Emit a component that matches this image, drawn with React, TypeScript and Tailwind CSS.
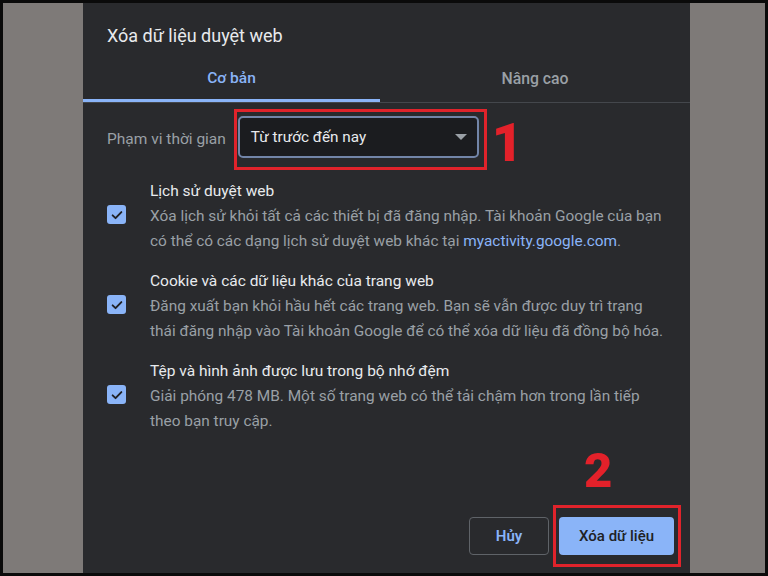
import React from "react";

function Check() {
  return (
    <div className="w-[19px] h-[19px] rounded-[3px] bg-[#8ab4f8] flex items-center justify-center shrink-0">
      <svg width="14" height="14" viewBox="0 0 24 24" fill="none">
        <path d="M4.5 12.5l5 5L19.5 7" stroke="#202124" strokeWidth="3.2" strokeLinecap="round" strokeLinejoin="round" />
      </svg>
    </div>
  );
}

function Item({ title, lines }: { title: string; lines: React.ReactNode[] }) {
  return (
    <div className="flex">
      <div className="mt-[26px] w-[19px] shrink-0">
        <Check />
      </div>
      <div className="ml-[24px]">
        <div className="text-[15.5px] leading-[24px] text-[#e8eaed] whitespace-nowrap">{title}</div>
        <div className="mt-[1px] text-[15.4px] leading-[25px] text-[#9aa0a6]">
          {lines.map((l, i) => (
            <div key={i} className="whitespace-nowrap">{l}</div>
          ))}
        </div>
      </div>
    </div>
  );
}

export default function App() {
  return (
    <div
      className="w-[768px] h-[576px] bg-[#0a0a0a] p-[3px] overflow-hidden"
      style={{ fontFamily: "Roboto, 'Noto Sans', sans-serif" }}
    >
      <div className="flex h-[570px]">
        <div className="w-[80px] bg-[#7e7a78]" />
        <div className="w-[607px] bg-[#292a2d] flex flex-col">
          <div className="pt-[21px] pl-[24px] text-[18px] leading-[24px] text-[#e8eaed]">
            Xóa dữ liệu duyệt web
          </div>
          <div className="flex border-b border-[#44474c]">
            <div className="w-[297px] h-[54px] pt-[10px] flex items-center justify-center border-b-[3px] border-[#8ab4f8] text-[15.5px] font-medium text-[#8ab4f8]">
              Cơ bản
            </div>
            <div className="flex-1 h-[54px] pt-[10px] pb-[3px] flex items-center justify-center text-[15.8px] font-medium text-[#9aa0a6]">
              Nâng cao
            </div>
          </div>
          <div className="flex items-start mt-[6px] pl-[24px]">
            <div className="mt-[20px] text-[15.5px] leading-[20px] text-[#9aa0a6] whitespace-nowrap">
              Phạm vi thời gian
            </div>
            <div className="ml-[8px] border-[3px] border-[#e0232b] pl-[1px] pr-[5px] pt-[4px] pb-[9px]">
              <div className="w-[241px] h-[42px] rounded-[5px] border-2 border-[#7285a8] bg-[#1b1c1f] flex items-center justify-between pl-[11px] pr-[10px]">
                <span className="text-[15.3px] text-[#e8eaed]">Từ trước đến nay</span>
                <svg width="12" height="6" viewBox="0 0 12 6">
                  <path d="M0 0h12L6 6z" fill="#9aa0a6" />
                </svg>
              </div>
            </div>
            <div className="ml-[5px] mt-[7px] text-[54px] leading-none font-black text-[#e3212a]">1</div>
          </div>
          <div className="mt-[9px] pl-[24px] flex flex-col gap-[15px]">
            <Item
              title="Lịch sử duyệt web"
              lines={[
                "Xóa lịch sử khỏi tất cả các thiết bị đã đăng nhập. Tài khoản Google của bạn",
                <>
                  có thể có các dạng lịch sử duyệt web khác tại{" "}
                  <span className="text-[#8ab4f8]">myactivity.google.com</span>.
                </>,
              ]}
            />
            <Item
              title="Cookie và các dữ liệu khác của trang web"
              lines={[
                "Đăng xuất bạn khỏi hầu hết các trang web. Bạn sẽ vẫn được duy trì trạng",
                "thái đăng nhập vào Tài khoản Google để có thể xóa dữ liệu đã đồng bộ hóa.",
              ]}
            />
            <Item
              title="Tệp và hình ảnh được lưu trong bộ nhớ đệm"
              lines={[
                "Giải phóng 478 MB. Một số trang web có thể tải chậm hơn trong lần tiếp",
                "theo bạn truy cập.",
              ]}
            />
          </div>
          <div className="mt-auto flex justify-end items-center pr-[9px] pb-[6px]">
            <button className="w-[80px] h-[38px] rounded-[4px] border border-[#5f6368] text-[15px] font-semibold text-[#8ab4f8]">
              Hủy
            </button>
            <div className="relative ml-[4px] border-[3px] border-[#e0232b] pl-[3px] pr-[4px] py-[9px]">
              <div className="absolute left-[28px] top-[-62px] text-[49px] leading-none font-black text-[#e3212a]">2</div>
              <button className="w-[115px] h-[38px] rounded-[4px] bg-[#8ab4f8] text-[15px] font-medium text-[#202124]">
                Xóa dữ liệu
              </button>
            </div>
          </div>
        </div>
        <div className="flex-1 bg-[#7e7a78]" />
      </div>
    </div>
  );
}
